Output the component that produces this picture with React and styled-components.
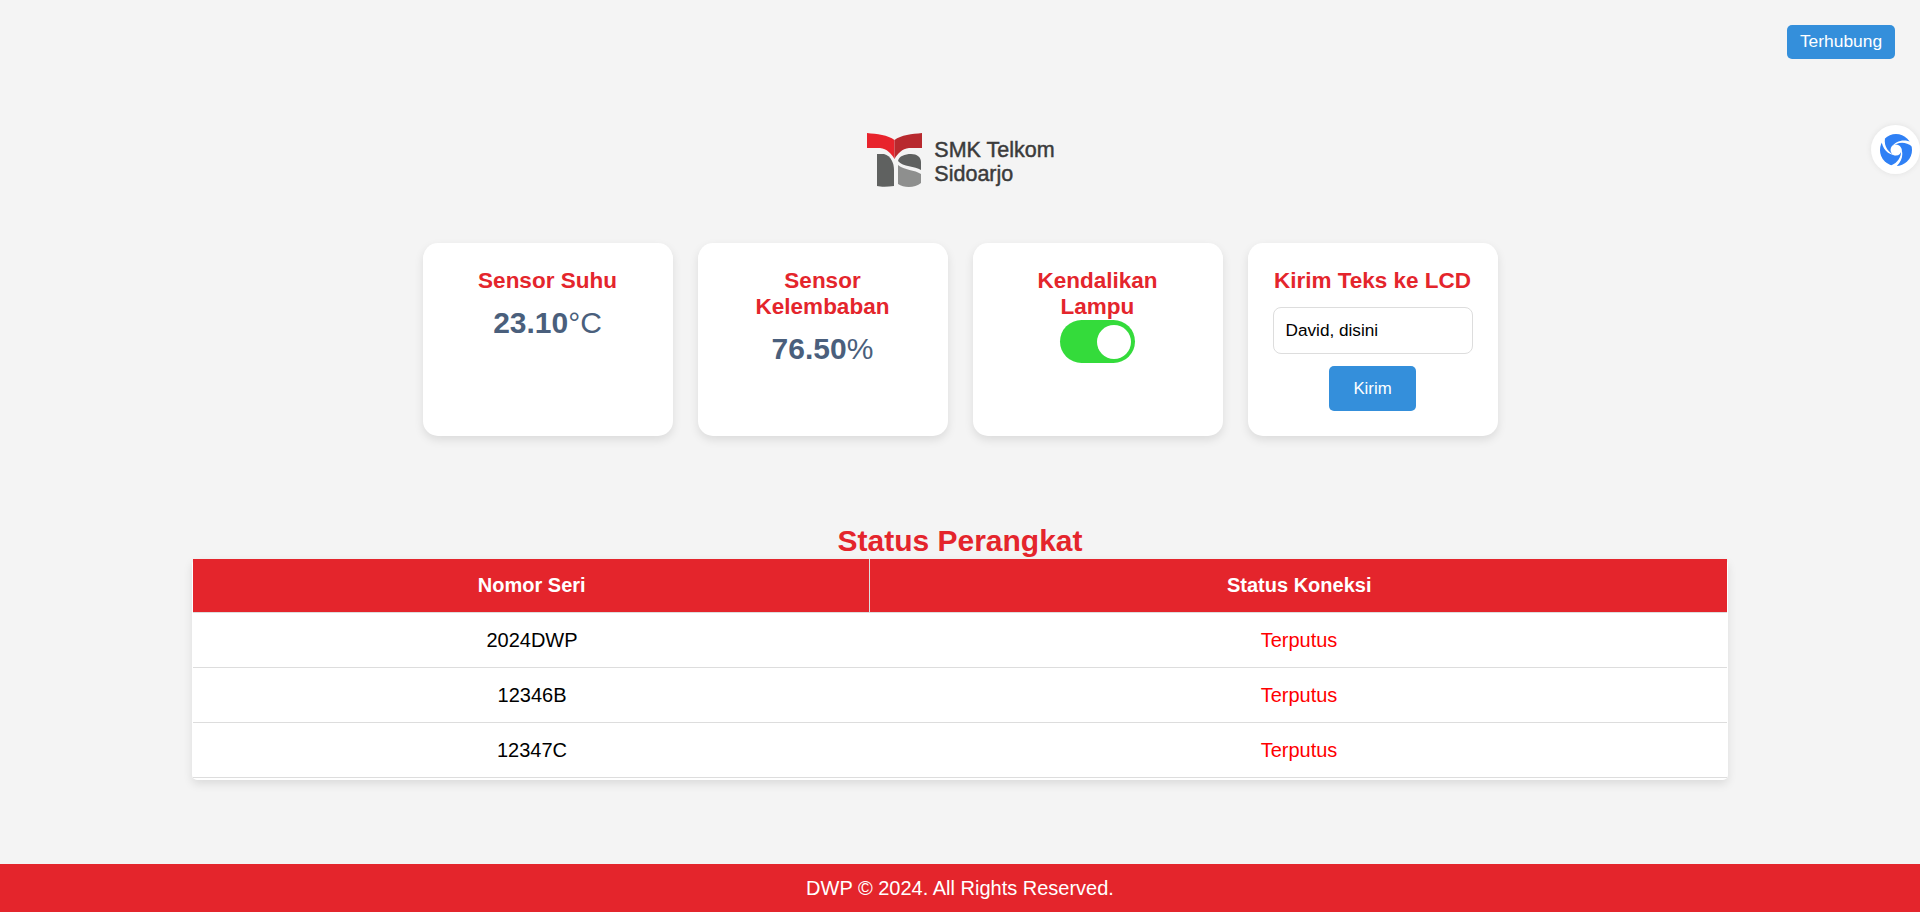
import { createGlobalStyle, styled } from "styled-components";

const GlobalStyle = createGlobalStyle`
  html, body {
    margin: 0;
    padding: 0;
  }

  body {
    background-color: #f4f4f4;
    font-family: "Liberation Sans", Arial, sans-serif;
    line-height: 1.2;
  }
`;

const devices = [
  { serial: "2024DWP", status: "Terputus" },
  { serial: "12346B", status: "Terputus" },
  { serial: "12347C", status: "Terputus" },
];

const Logo = () => (
  <LogoWrap>
    <svg width="55" height="54" viewBox="0 0 55 54">
      <path d="M0 0 C10 1 21 2 27.5 7 V26 C24 20 20 16 13 15 H0 Z" fill="#e8232c" />
      <path d="M55 0 C45 1 34 2 27.5 7 V26 C31 20 35 16 42 15 H55 Z" fill="#b8292e" />
      <path d="M10 21 H17 C24 23 27 30 27 37 V53 C20 54 14 54 10 53 Z" fill="#5f6160" />
      <path d="M31 28 C32 23 38 21 44 21 C50 21 54 24 54 29 V37 C48 33 36 34 31 28 Z" fill="#5f6160" />
      <path d="M31 32 C37 37 48 37 54 41 V50 C48 55 37 55 31 51 Z" fill="#8e8f8e" />
    </svg>
    <LogoText>
      SMK Telkom
      <br />
      Sidoarjo
    </LogoText>
  </LogoWrap>
);

const Swirl = () => (
  <svg width="32" height="32" viewBox="-16 -16 32 32">
    <circle r="16" fill="#2f80f5" />
    <circle r="5.5" fill="#ffffff" />
    {[0, 120, 240].map((angle) => (
      <path
        key={angle}
        transform={`rotate(${angle})`}
        d="M-5 -2.5 C0 -9.5 8 -11.5 16.5 -7.5 L16 -3.5 C9 -9 1 -8 -5 -2.5 Z"
        fill="#ffffff"
      />
    ))}
  </svg>
);

const App = () => {
  return (
    <Page>
      <GlobalStyle />
      <ConnectionBadge>Terhubung</ConnectionBadge>
      <FloatingButton>
        <Swirl />
      </FloatingButton>

      <Logo />

      <Cards>
        <Card>
          <CardTitle>Sensor Suhu</CardTitle>
          <Reading>
            <strong>23.10</strong>°C
          </Reading>
        </Card>
        <Card>
          <CardTitle>Sensor Kelembaban</CardTitle>
          <Reading>
            <strong>76.50</strong>%
          </Reading>
        </Card>
        <Card>
          <CardTitle>
            Kendalikan
            <br />
            Lampu
          </CardTitle>
          <Switch />
        </Card>
        <Card>
          <CardTitle>Kirim Teks ke LCD</CardTitle>
          <TextInput defaultValue="David, disini" />
          <SendButton>Kirim</SendButton>
        </Card>
      </Cards>

      <SectionTitle>Status Perangkat</SectionTitle>
      <TableWrap>
        <Table>
          <thead>
            <tr>
              <HeadCell>Nomor Seri</HeadCell>
              <HeadCell>Status Koneksi</HeadCell>
            </tr>
          </thead>
          <tbody>
            {devices.map((device) => (
              <tr key={device.serial}>
                <Cell>{device.serial}</Cell>
                <Cell $status>{device.status}</Cell>
              </tr>
            ))}
          </tbody>
        </Table>
      </TableWrap>

      <Footer>DWP © 2024. All Rights Reserved.</Footer>
    </Page>
  );
};

export default App;

const Page = styled.div`
  display: flex;
  flex-direction: column;
  align-items: center;
  min-height: 912px;
  padding-top: 133px;
  box-sizing: border-box;
`;

const ConnectionBadge = styled.button`
  position: absolute;
  top: 25px;
  right: 25px;
  height: 34px;
  width: 108px;
  padding: 0 0 2px;
  border: none;
  border-radius: 5px;
  background-color: #348fdb;
  color: #fff;
  font-family: inherit;
  font-size: 17.4px;
`;

const FloatingButton = styled.div`
  position: absolute;
  top: 125px;
  right: 0;
  width: 49px;
  height: 49px;
  display: flex;
  align-items: center;
  justify-content: center;
  border-radius: 50%;
  background-color: #fff;
  box-shadow: 0 0 6px rgba(0, 0, 0, 0.08);
`;

const LogoWrap = styled.div`
  display: flex;
  align-items: center;
  gap: 12px;
  height: 54px;
  margin-left: 2px;
`;

const LogoText = styled.div`
  padding-top: 4px;
  font-size: 21.5px;
  line-height: 24px;
  color: #3b3b3b;
  -webkit-text-stroke: 0.45px #3b3b3b;
`;

const Cards = styled.div`
  display: flex;
  gap: 25px;
  margin-top: 56px;
`;

const Card = styled.div`
  width: 250px;
  height: 193px;
  box-sizing: border-box;
  padding: 25px 25px 0;
  background-color: #fff;
  border-radius: 15px;
  box-shadow: 0 4px 10px rgba(0, 0, 0, 0.1);
  text-align: center;
  display: flex;
  flex-direction: column;
  align-items: center;
`;

const CardTitle = styled.h3`
  margin: 0;
  font-size: 22.5px;
  line-height: 26px;
  color: #e4252c;
`;

const Reading = styled.p`
  margin: 11px 0 0;
  font-size: 30px;
  line-height: 36px;
  color: #4a5f7c;

  strong {
    font-weight: 700;
  }
`;

const Switch = styled.div`
  position: relative;
  width: 75px;
  height: 43px;
  border-radius: 22px;
  background-color: #34db3b;
  flex-shrink: 0;

  &::after {
    content: "";
    position: absolute;
    top: 5px;
    right: 4px;
    width: 34px;
    height: 34px;
    border-radius: 50%;
    background-color: #fff;
  }
`;

const TextInput = styled.input`
  width: 200px;
  height: 47px;
  margin-top: 13px;
  padding: 0 12px;
  box-sizing: border-box;
  flex-shrink: 0;
  border: 1px solid #ddd;
  border-radius: 8px;
  background-color: #fff;
  color: #000;
  font-family: inherit;
  font-size: 17.2px;
  outline: none;
`;

const SendButton = styled.button`
  width: 87px;
  height: 45px;
  margin-top: 12px;
  flex-shrink: 0;
  border: none;
  border-radius: 5px;
  background-color: #348fdb;
  color: #fff;
  font-family: inherit;
  font-size: 16.8px;
`;

const SectionTitle = styled.h2`
  margin: 86px 0 0;
  font-size: 30px;
  line-height: 37px;
  color: #e4252c;
`;

const TableWrap = styled.div`
  width: 1536px;
  box-sizing: border-box;
  padding: 0 1px 2px 1px;
  background-color: #fff;
  border-radius: 5px;
  box-shadow: 0 4px 10px rgba(0, 0, 0, 0.1);
`;

const Table = styled.table`
  width: 100%;
  border-collapse: collapse;
`;

const HeadCell = styled.th`
  box-sizing: border-box;
  padding: 14px 14px 15px 16px;
  background-color: #e4252c;
  color: #fff;
  font-size: 20px;
  font-weight: 700;
  border-right: 1px solid #ddd;
  border-bottom: 1px solid #ddd;

  &:first-child {
    width: 676px;
  }

  &:last-child {
    border-right: none;
  }
`;

const Cell = styled.td`
  padding: 15px 14px 15px 16px;
  text-align: center;
  font-size: 20px;
  color: ${(props) => (props.$status ? "#ff0000" : "#000")};
  border-bottom: 1px solid #ddd;
`;

const Footer = styled.footer`
  margin-top: auto;
  width: 100%;
  height: 48px;
  display: flex;
  align-items: center;
  justify-content: center;
  background-color: #e4252c;
  color: #fff;
  font-size: 20px;
`;
